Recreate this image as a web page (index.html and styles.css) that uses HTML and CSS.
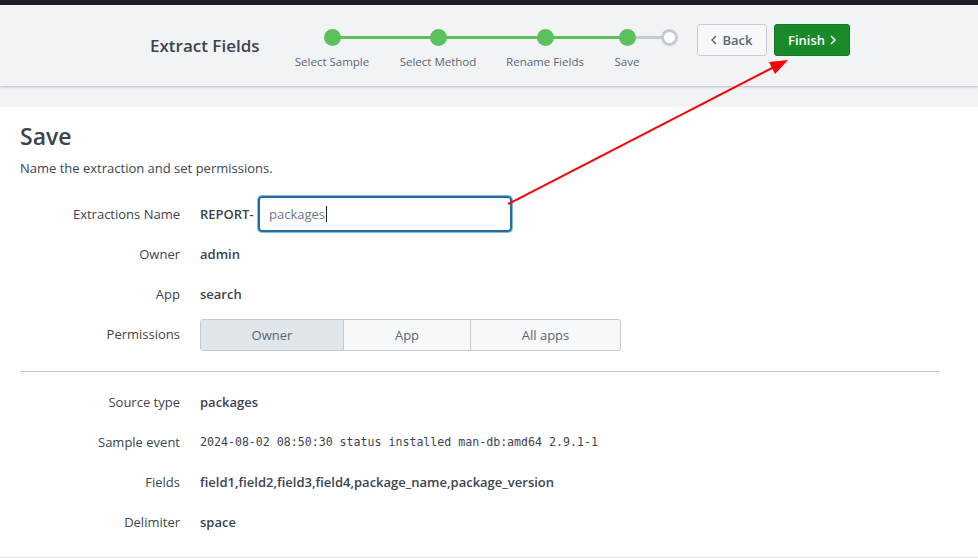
FILE: index.html
```html
<!DOCTYPE html>
<html>
<head>
<meta charset="utf-8">
<link rel="stylesheet" href="styles.css">
</head>
<body>
<div class="topbar"></div>
<header class="header">
  <h1 class="title">Extract Fields</h1>
  <div class="steps">
    <div class="track"><div class="track-done"></div></div>
    <div class="step s1"><span class="dot"></span><span class="label">Select Sample</span></div>
    <div class="step s2"><span class="dot"></span><span class="label">Select Method</span></div>
    <div class="step s3"><span class="dot"></span><span class="label">Rename Fields</span></div>
    <div class="step s4"><span class="dot"></span><span class="label">Save</span></div>
    <div class="step s5"><span class="dot dot-open"></span><span class="label">&nbsp;</span></div>
  </div>
  <div class="actions">
    <button class="btn btn-back"><svg class="ico" width="6" height="10" viewBox="0 0 6 10"><path d="M5 1 L1 5 L5 9" fill="none" stroke="currentColor" stroke-width="1.4"/></svg>Back</button>
    <button class="btn btn-finish">Finish<svg class="ico ico-r" width="6" height="10" viewBox="0 0 6 10"><path d="M1 1 L5 5 L1 9" fill="none" stroke="currentColor" stroke-width="1.4"/></svg></button>
  </div>
</header>
<div class="band"></div>
<main class="content">
  <h2 class="heading">Save</h2>
  <p class="sub">Name the extraction and set permissions.</p>
  <div class="form">
    <div class="row row-first">
      <div class="lbl">Extractions Name</div>
      <div class="val"><b class="prefix">REPORT-</b><div class="input">packages<span class="caret"></span></div></div>
    </div>
    <div class="row"><div class="lbl">Owner</div><div class="val"><b>admin</b></div></div>
    <div class="row"><div class="lbl">App</div><div class="val"><b>search</b></div></div>
    <div class="row">
      <div class="lbl">Permissions</div>
      <div class="val">
        <div class="seg">
          <div class="seg-item seg-owner active">Owner</div>
          <div class="seg-item seg-app">App</div>
          <div class="seg-item seg-all">All apps</div>
        </div>
      </div>
    </div>
    <hr class="divider">
    <div class="row"><div class="lbl">Source type</div><div class="val"><b>packages</b></div></div>
    <div class="row"><div class="lbl">Sample event</div><div class="val"><code class="mono">2024-08-02 08:50:30 status installed man-db:amd64 2.9.1-1</code></div></div>
    <div class="row"><div class="lbl">Fields</div><div class="val"><b>field1,field2,field3,field4,package_name,package_version</b></div></div>
    <div class="row"><div class="lbl">Delimiter</div><div class="val"><b>space</b></div></div>
  </div>
</main>
<footer class="footer"></footer>
<svg class="annot" width="978" height="558" viewBox="0 0 978 558">
  <line x1="508" y1="204" x2="776" y2="66" stroke="#ff0000" stroke-width="2"/>
  <polygon points="788,60 775,74 769,62" fill="#ff0000"/>
</svg>
</body>
</html>
```

FILE: styles.css
```css
* { box-sizing: border-box; }
html, body { margin: 0; padding: 0; }
body {
  font-family: "Open Sans", Lato, sans-serif;
  color: #3c444d;
  background: #fff;
  position: relative;
  width: 978px;
  height: 558px;
  overflow: hidden;
}
.topbar { height: 5px; background: #1b1e22; }
.header {
  height: 81px;
  background: #f2f3f5;
  display: flex;
  align-items: flex-start;
  padding-left: 150px;
  box-shadow: 0 1px 2px rgba(60, 80, 100, 0.35);
  position: relative;
  z-index: 1;
}
.title {
  margin: 31px 0 0 0;
  width: 132px;
  font-size: 17px;
  font-weight: 600;
  color: #3c444d;
  line-height: 20px;
  white-space: nowrap;
}
.steps {
  display: flex;
  margin-top: 24px;
  position: relative;
}
.track {
  position: absolute;
  left: 50px;
  top: 7px;
  width: 338px;
  height: 3px;
  background: #c3cbd4;
}
.track-done { width: 295px; height: 3px; background: #5cc05c; }
.step {
  display: flex;
  flex-direction: column;
  align-items: center;
  position: relative;
}
.s1 { width: 100px; }
.s2 { width: 100px; margin-left: 6px; }
.s3 { width: 100px; margin-left: 7px; }
.s4 { width: 60px; margin-left: 2px; }
.s5 { width: 17px; margin-left: 4px; }
.dot {
  width: 17px; height: 17px;
  border-radius: 50%;
  background: #5cc05c;
  display: block;
}
.dot-open { background: #fff; border: 3px solid #c3cbd4; }
.label {
  margin-top: 9px;
  font-size: 11.5px;
  color: #5c6773;
  white-space: nowrap;
  line-height: 14px;
}
.actions { display: flex; gap: 7px; margin-left: 19px; margin-top: 19px; }
.btn {
  height: 32px;
  border-radius: 3px;
  font-family: "Open Sans", sans-serif;
  font-size: 13px;
  font-weight: 600;
  padding: 0;
  display: flex;
  align-items: center;
  justify-content: center;
}
.ico { margin-right: 5px; }
.ico-r { margin: 0 0 0 5px; }
.btn-back {
  width: 70px;
  background: #f7f8fa;
  border: 1px solid #c3cbd4;
  color: #5c6773;
}
.btn-finish {
  width: 76px;
  background: #1a8929;
  border: 1px solid #137a22;
  color: #fff;
}
.band { height: 21px; background: #f2f3f5; }
.content { padding: 0 38px 0 20px; }
.heading {
  margin: 15px 0 0;
  font-size: 23px;
  font-weight: 600;
  line-height: 28px;
}
.sub { margin: 9px 0 0; font-size: 13px; line-height: 18px; }
.form { margin-top: 17px; }
.row { display: flex; align-items: center; height: 40px; }
.row-first { height: 40px; margin-top: 1px; }
.lbl { width: 160px; text-align: right; font-size: 13px; color: #3c444d; }
.val { margin-left: 20px; display: flex; align-items: center; font-size: 13px; }
.val b { font-weight: 600; }
.prefix { width: 58px; }
.input {
  width: 254px; height: 36px;
  border: 2px solid #1f6fa6;
  border-radius: 4px;
  box-shadow: 0 0 0 1px #8cb8d6;
  display: flex; align-items: center;
  padding-left: 9px;
  color: #6b7785;
  font-size: 13px;
}
.caret { display: inline-block; width: 1px; height: 16px; background: #222; margin-left: 1px; }
.seg {
  display: flex;
  height: 32px;
  border: 1px solid #c3cbd4;
  border-radius: 3px;
  background: #f7f8fa;
  overflow: hidden;
  margin-top: 2px;
}
.seg-item { display: flex; align-items: center; justify-content: center; color: #5c6773; font-size: 13px; }
.seg-owner { width: 142px; }
.seg-app { width: 127px; border-left: 1px solid #c3cbd4; }
.seg-all { width: 150px; border-left: 1px solid #c3cbd4; }
.active { background: #e1e6eb; }
.divider { border: 0; border-top: 1px solid #c3cbd4; margin: 17px 0 10px; }
.mono { font-family: "DejaVu Sans Mono", monospace; font-size: 11.6px; color: #3c444d; }
.footer {
  position: absolute; left: 0; right: 0; top: 557px; height: 1px;
  border-top: 1px solid #dfe3e8;
}
.annot { position: absolute; left: 0; top: 0; pointer-events: none; z-index: 5; }
```
